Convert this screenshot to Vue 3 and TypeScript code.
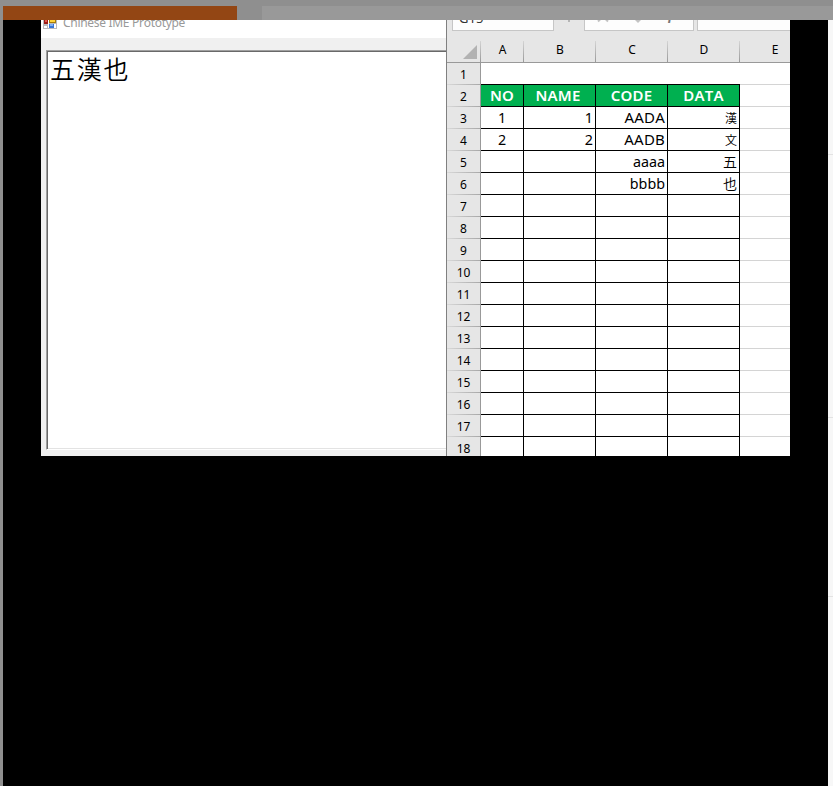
<script setup lang="ts">
interface Row {
  no: string
  name: string
  code: string
  data: string
  small?: boolean
}

const columns: string[] = ['A', 'B', 'C', 'D', 'E']
const filled: Row[] = [
  { no: '1', name: '1', code: 'AADA', data: '漢', small: true },
  { no: '2', name: '2', code: 'AADB', data: '文', small: true },
  { no: '', name: '', code: 'aaaa', data: '五' },
  { no: '', name: '', code: 'bbbb', data: '也' },
]
const blank: Row = { no: '', name: '', code: '', data: '' }
const rows: Row[] = Array.from({ length: 16 }, (_, i) => filled[i] ?? blank)
</script>

<template>
  <div class="page">
    <header class="top">
      <div class="accent"></div>
      <div class="track"></div>
    </header>
    <div class="body">
      <main class="stage">
        <div class="shot">
          <section class="ime">
            <div class="title">
              <svg class="app-icon" width="14" height="13" viewBox="0 0 14 13" shape-rendering="crispEdges">
                <path fill="#b9b9bd" d="M0 0h14v13H0z" />
                <path fill="#fff" d="M1 10h3v2H1zM6 8h7v4H6zM5 0h1v12H5z" />
                <path fill="#9c1d17" d="M1 2h4v6H1z" />
                <path fill="#e4574c" d="M2 3h2v3H2z" />
                <path fill="#a77b08" d="M6 0h7v7H6z" />
                <path fill="#ffd33c" d="M7 0h5v6H7z" />
                <path fill="#3975d6" d="M6 8h5v4H6z" />
                <path fill="#80b2f5" d="M7 8h3v2H7z" />
              </svg>
              <span class="title-text">Chinese IME Prototype</span>
            </div>
            <div class="editor">五漢也</div>
          </section>
          <section class="excel">
            <div class="formula">
              <div class="box name-box"><span>G15</span></div>
              <i class="dots"></i>
              <div class="box tools">
                <svg width="108" height="10" viewBox="0 0 108 10">
                  <path d="M13 1.5l3-3M23 1.5l-3-3" stroke="#c3c3c3" stroke-width="2" />
                  <path d="M50 0h6l-3 3z" fill="#c3c3c3" />
                </svg>
                <span class="fx">fx</span>
              </div>
              <div class="box input"></div>
            </div>
            <div class="sheet">
              <div class="corner"><svg width="14" height="14"><path d="M14 0v14H0z" fill="#b2b2b2" /></svg></div>
              <div v-for="c in columns" :key="c" class="col" :class="{ last: c === 'E' }">{{ c }}</div>
              <div class="num">1</div>
              <div class="row-one"></div>
              <div class="num">2</div>
              <div class="cell head">NO</div>
              <div class="cell head name">NAME</div>
              <div class="cell head">CODE</div>
              <div class="cell head">DATA</div>
              <div class="outer"></div>
              <template v-for="(r, i) in rows" :key="i">
                <div class="num">{{ i + 3 }}</div>
                <div class="cell center">{{ r.no }}</div>
                <div class="cell">{{ r.name }}</div>
                <div class="cell" :class="{ upper: r.small }">{{ r.code }}</div>
                <div class="cell han" :class="{ small: r.small }">{{ r.data }}</div>
                <div class="outer"></div>
              </template>
            </div>
          </section>
        </div>
      </main>
      <aside class="side"><i></i><i></i><i></i></aside>
    </div>
  </div>
</template>

<style>
body {
  overflow: hidden;
}
</style>

<style scoped>
.page {
  width: 833px;
  height: 786px;
  display: flex;
  flex-direction: column;
  background: #8f8f8f;
  overflow: hidden;
  font-family: "Noto Sans", "Noto Sans CJK KR", sans-serif;
  font-kerning: none;
  color: #000;
}
.page * {
  box-sizing: border-box;
}
.top {
  height: 20px;
  flex: none;
  padding: 6px 0 0 3px;
  display: flex;
  gap: 25px;
}
.accent {
  width: 234px;
  background: #934614;
}
.track {
  flex: 1;
  background: #999;
}
.body {
  flex: 1;
  display: flex;
  padding-left: 3px;
}
.stage {
  width: 825px;
  padding-left: 38px;
  background: #000;
}
.side {
  width: 5px;
  background: #f7f7f7;
  display: grid;
  grid-template-rows: 135px 263px 179px;
}
.side i {
  border-bottom: 1px solid #e3e3e3;
}
.shot {
  width: 749px;
  height: 436px;
  display: flex;
  overflow: hidden;
}
.ime {
  width: 405px;
  background: #f0f0f0;
}
.title {
  height: 18px;
  background: #fff;
  display: flex;
  align-items: flex-start;
  padding-left: 2px;
  gap: 6px;
  overflow: hidden;
}
.app-icon {
  flex: none;
  margin-top: -4px;
}
.title-text {
  font-size: 12px;
  line-height: 16px;
  letter-spacing: -0.3px;
  margin-top: -5px;
  color: #999;
  white-space: nowrap;
}
.editor {
  height: 400px;
  margin: 12px 0 0 5px;
  border-style: solid;
  border-width: 1px 0 1px 1px;
  border-color: #a0a0a0 transparent #fff #a0a0a0;
  box-shadow: inset 1px 1px 0 #696969, inset 0 -1px 0 #e3e3e3;
  background: #fff;
  padding: 0 0 0 3px;
  font-family: "Noto Sans CJK KR", sans-serif;
  font-weight: 350;
  font-size: 25px;
  letter-spacing: 1.7px;
  line-height: 35px;
}
.excel {
  width: 344px;
  border-left: 1px solid #808080;
  background: #e6e6e6;
  overflow: hidden;
}
.formula {
  height: 21px;
  display: flex;
  padding-left: 5px;
}
.box {
  height: 11px;
  background: #fdfdfd;
  border: solid #c6c6c6;
  border-width: 0 1px 1px;
  overflow: hidden;
}
.name-box {
  width: 102px;
  padding-left: 6px;
  font-size: 13px;
}
.name-box span {
  display: block;
  line-height: 18px;
  margin-top: -11px;
  color: #333;
}
.dots {
  width: 2px;
  height: 2px;
  margin: 0 14px;
  background: #b5b5b5;
}
.tools {
  width: 110px;
  display: flex;
}
.tools svg {
  flex: none;
}
.fx {
  margin: -14px 0 0 -25px;
  font: italic bold 15px/18px "Liberation Serif", serif;
  letter-spacing: 1px;
  color: #777;
}
.input {
  flex: 1;
  margin-left: 3px;
  border-right: 0;
}
.sheet {
  width: 365px;
  display: grid;
  grid-template-columns: 34px 43px 72px 72px 72px 72px;
  grid-template-rows: 22px;
  grid-auto-rows: 22px;
}
.corner,
.col {
  border-bottom: 1px solid #999;
  background: linear-gradient(#d4d4d4, #999) right / 1px 100% no-repeat;
}
.corner {
  padding: 4px 0 0 16px;
}
.corner svg {
  display: block;
}
.col {
  font-size: 12px;
  line-height: 17px;
  text-align: center;
}
.last {
  padding-right: 2px;
}
.num {
  border-right: 1px solid #999;
  background: linear-gradient(90deg, #d8d8d8, #a8a8a8) bottom / 100% 1px no-repeat;
  font-size: 12px;
  line-height: 23px;
  text-align: center;
}
.row-one {
  grid-column: 2 / 7;
  background: linear-gradient(90deg, #000 259px, #d4d4d4 259px) bottom / 100% 1px no-repeat #fff;
}
.cell {
  background: #fff;
  border: solid #000;
  border-width: 0 1px 1px 0;
  padding-right: 2px;
  font-size: 14.3px;
  line-height: 21px;
  text-align: right;
  overflow: hidden;
}
.upper {
  font-size: 15px;
  letter-spacing: 0.2px;
}
.center {
  text-align: center;
  padding: 0;
}
.head {
  background: #00b050;
  color: #fff;
  font-size: 15px;
  font-weight: 600;
  letter-spacing: 0.2px;
  text-align: center;
  padding: 0;
}
.name {
  padding-right: 3px;
}
.han {
  font-family: "Noto Sans CJK KR", sans-serif;
  font-weight: 350;
  font-size: 14px;
}
.small {
  font-size: 12px;
  line-height: 22px;
}
.outer {
  background: #fff;
  border-bottom: 1px solid #d4d4d4;
}
</style>
